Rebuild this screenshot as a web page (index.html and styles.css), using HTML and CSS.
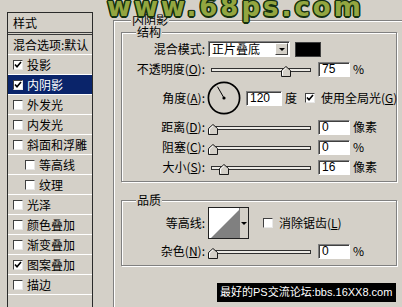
FILE: index.html
```html
<!DOCTYPE html>
<html lang="zh-CN">
<head>
<meta charset="utf-8">
<title>图层样式 - 内阴影</title>
<link rel="stylesheet" href="styles.css">
</head>
<body>
<div class="dialog">
  <div class="styles-panel">
    <div class="panel-head">样式</div>
    <div class="item plain">混合选项:默认</div>
    <div class="item"><span class="cb on"><svg viewBox="0 0 8 8"><path d="M1 3.5L3 5.8L7 1" fill="none" stroke="#000" stroke-width="1.6"/></svg></span>投影</div>
    <div class="item selected"><span class="cb on"><svg viewBox="0 0 8 8"><path d="M1 3.5L3 5.8L7 1" fill="none" stroke="#000" stroke-width="1.6"/></svg></span>内阴影</div>
    <div class="item"><span class="cb"></span>外发光</div>
    <div class="item"><span class="cb"></span>内发光</div>
    <div class="item"><span class="cb"></span>斜面和浮雕</div>
    <div class="item sub"><span class="cb"></span>等高线</div>
    <div class="item sub"><span class="cb"></span>纹理</div>
    <div class="item"><span class="cb"></span>光泽</div>
    <div class="item"><span class="cb"></span>颜色叠加</div>
    <div class="item"><span class="cb"></span>渐变叠加</div>
    <div class="item"><span class="cb on"><svg viewBox="0 0 8 8"><path d="M1 3.5L3 5.8L7 1" fill="none" stroke="#000" stroke-width="1.6"/></svg></span>图案叠加</div>
    <div class="item"><span class="cb"></span>描边</div>
  </div>

  <div class="group outer">
    <div class="group-title outer-title">内阴影</div>

    <div class="group structure">
      <div class="group-title">结构</div>
      <div class="row first">
        <span class="label">混合模式:</span>
        <div class="select"><span class="select-text">正片叠底</span><span class="select-btn"><i class="tri"></i></span></div>
        <span class="swatch"></span>
      </div>
      <div class="row">
        <span class="label">不透明度(<u>O</u>):</span>
        <div class="slider"><div class="track"></div><svg class="thumb" style="left:73px" viewBox="0 0 10 11"><path d="M0.5 10.5V4.5L5 0.5L9.5 4.5V10.5Z" fill="#d4d0c8" stroke="#1a1a1a"/><path d="M1.5 9.5V5L5 1.8" fill="none" stroke="#fff"/></svg></div>
        <span class="field">75</span><span class="unit">%</span>
      </div>
      <div class="row angle">
        <span class="label">角度(<u>A</u>):</span>
        <svg class="dial" viewBox="0 0 34 34"><circle cx="17" cy="17" r="15.6" fill="none" stroke="#000" stroke-width="1.7"/><line x1="17" y1="17" x2="10.5" y2="5.7" stroke="#000" stroke-width="1"/><circle cx="17" cy="17" r="1.6" fill="#000"/></svg>
        <span class="field wide">120</span><span class="unit">度</span>
        <span class="cb on global"><svg viewBox="0 0 8 8"><path d="M1 3.5L3 5.8L7 1" fill="none" stroke="#000" stroke-width="1.6"/></svg></span>
        <span class="cb-text">使用全局光(<u>G</u>)</span>
      </div>
      <div class="row slider-row">
        <span class="label">距离(<u>D</u>):</span>
        <div class="slider"><div class="track"></div><svg class="thumb" style="left:0px" viewBox="0 0 10 11"><path d="M0.5 10.5V4.5L5 0.5L9.5 4.5V10.5Z" fill="#d4d0c8" stroke="#1a1a1a"/><path d="M1.5 9.5V5L5 1.8" fill="none" stroke="#fff"/></svg></div>
        <span class="field">0</span><span class="unit">像素</span>
      </div>
      <div class="row slider-row">
        <span class="label">阻塞(<u>C</u>):</span>
        <div class="slider"><div class="track"></div><svg class="thumb" style="left:0px" viewBox="0 0 10 11"><path d="M0.5 10.5V4.5L5 0.5L9.5 4.5V10.5Z" fill="#d4d0c8" stroke="#1a1a1a"/><path d="M1.5 9.5V5L5 1.8" fill="none" stroke="#fff"/></svg></div>
        <span class="field">0</span><span class="unit">%</span>
      </div>
      <div class="row slider-row">
        <span class="label">大小(<u>S</u>):</span>
        <div class="slider"><div class="track"></div><svg class="thumb" style="left:11px" viewBox="0 0 10 11"><path d="M0.5 10.5V4.5L5 0.5L9.5 4.5V10.5Z" fill="#d4d0c8" stroke="#1a1a1a"/><path d="M1.5 9.5V5L5 1.8" fill="none" stroke="#fff"/></svg></div>
        <span class="field">16</span><span class="unit">像素</span>
      </div>
    </div>

    <div class="group quality">
      <div class="group-title">品质</div>
      <div class="row contour-row">
        <span class="label">等高线:</span>
        <div class="contour">
          <svg class="contour-preview" viewBox="0 0 30 30"><rect width="30" height="30" fill="#fff"/><path d="M2 30L30 2V30Z" fill="#808080"/></svg>
          <span class="contour-btn"><i class="tri"></i></span>
        </div>
        <span class="cb aa"></span>
        <span class="cb-text">消除锯齿(<u>L</u>)</span>
      </div>
      <div class="row slider-row noise">
        <span class="label">杂色(<u>N</u>):</span>
        <div class="slider"><div class="track"></div><svg class="thumb" style="left:0px" viewBox="0 0 10 11"><path d="M0.5 10.5V4.5L5 0.5L9.5 4.5V10.5Z" fill="#d4d0c8" stroke="#1a1a1a"/><path d="M1.5 9.5V5L5 1.8" fill="none" stroke="#fff"/></svg></div>
        <span class="field">0</span><span class="unit">%</span>
      </div>
    </div>
  </div>
</div>

<div class="watermark">www.68ps.com</div>
<div class="banner">最好的PS交流论坛:bbs.16XX8.com</div>
</body>
</html>
```

FILE: styles.css
```css
* { box-sizing: border-box; }

html, body {
  margin: 0;
  padding: 0;
}

body {
  width: 402px;
  height: 307px;
  overflow: hidden;
  position: relative;
  background: #d4d0c8;
  color: #000;
  font-family: "Noto Sans CJK SC", "DejaVu Sans", sans-serif;
  font-size: 12px;
  line-height: 14px;
}

u { text-decoration: underline; text-underline-offset: 1px; }

.dialog {
  display: flex;
  align-items: flex-start;
  padding: 12px 0 0 7px;
}

/* left style list */
.styles-panel {
  width: 86px;
  height: 310px;
  flex: none;
  border: 1px solid #2a2a2a;
  border-bottom: none;
}

.panel-head {
  height: 22px;
  padding: 3px 0 0 5px;
  border-bottom: 3px double #3a3a3a;
}

.item {
  display: flex;
  align-items: center;
  height: 20px;
  padding-left: 5px;
  border-bottom: 1px solid #fff;
  white-space: nowrap;
}

.item.plain { padding-left: 5px; }
.item.sub { padding-left: 17px; }

.item.selected {
  background: #0a246a;
  color: #fff;
}

.cb {
  position: relative;
  flex: none;
  width: 10px;
  height: 10px;
  margin-right: 4px;
  background: #fff;
  border: 1px solid;
  border-color: #404040 #e8e8e8 #e8e8e8 #404040;
  display: inline-flex;
  align-items: center;
  justify-content: center;
}

.cb svg { width: 8px; height: 8px; display: block; }

/* group boxes */
.group {
  border: 1px solid #808080;
  box-shadow: inset 1px 1px 0 #fff, 1px 1px 0 #fff;
}

.group-title {
  width: fit-content;
  margin: -8px 0 0 14px;
  padding: 0 1px;
  line-height: 14px;
  background: #d4d0c8;
  position: relative;
}

.outer {
  flex: none;
  width: 300px;
  height: 300px;
  margin: 8px 0 0 20px;
  padding-left: 7px;
  border-right: none;
  border-bottom: none;
}

.outer-title { margin-left: 10px; }

.structure {
  width: 276px;
  margin-top: 5px;
  padding-bottom: 6px;
}

.quality {
  width: 276px;
  margin-top: 18px;
  padding-bottom: 6px;
}

/* rows */
.row {
  display: flex;
  align-items: center;
  height: 16px;
  margin-top: 4px;
  white-space: nowrap;
}

.row.first { margin-top: 2px; }
.row.angle { height: 34px; margin-top: 4px; }
.row.angle + .row { margin-top: 4px; }

.label {
  flex: none;
  width: 83px;
  text-align: right;
}

.select {
  display: flex;
  align-items: center;
  width: 82px;
  height: 16px;
  margin-left: 3px;
  background: #fff;
  border: 1px solid;
  border-color: #808080 #fff #fff #808080;
  box-shadow: inset 1px 1px 0 #404040;
}

.select-text { flex: 1; padding-left: 3px; }

.select-btn {
  display: flex;
  align-items: center;
  justify-content: center;
  width: 13px;
  height: 12px;
  margin-right: 1px;
  background: #d4d0c8;
  border: 1px solid;
  border-color: #fff #404040 #404040 #fff;
}

.tri {
  width: 0;
  height: 0;
  border-left: 3px solid transparent;
  border-right: 3px solid transparent;
  border-top: 3px solid #000;
}

.swatch {
  width: 26px;
  height: 15px;
  margin-left: 5px;
  background: #000;
  border: 1px solid #404040;
}

.slider {
  position: relative;
  flex: none;
  width: 104px;
  height: 16px;
  margin-left: 3px;
}

.track {
  width: 100px;
  height: 4px;
  margin: 7px 0 0 3px;
  background: #ebe9e4;
  border: 1px solid #303030;
}

.thumb {
  position: absolute;
  top: 5px;
  width: 10px;
  height: 11px;
}

.field {
  flex: none;
  width: 32px;
  height: 15px;
  margin-left: 6px;
  padding-left: 3px;
  background: #fff;
  border: 1px solid;
  border-color: #808080 #fff #fff #808080;
  box-shadow: inset 1px 1px 0 #404040;
  font-family: "Liberation Sans", "DejaVu Sans", sans-serif;
  font-size: 12px;
  line-height: 13px;
}

.field.wide { width: 36px; margin-left: 5px; }

.unit {
  margin-left: 3px;
}

.dial {
  flex: none;
  width: 34px;
  height: 34px;
  margin-left: 2px;
}

.cb.global { margin-left: 8px; margin-right: 0; }
.cb-text { margin-left: 6px; }

/* quality */
.row.contour-row { height: 32px; margin-top: 0; }

.contour {
  display: flex;
  width: 41px;
  height: 32px;
  margin-left: 3px;
  border: 1px solid #202020;
}

.contour-preview {
  width: 30px;
  height: 30px;
  display: block;
}

.contour-btn {
  display: flex;
  align-items: center;
  justify-content: center;
  width: 9px;
  background: #d4d0c8;
  border-left: 1px solid #808080;
}

.cb.aa { margin-left: 14px; margin-right: 0; }
.row.noise { margin-top: 4px; }

/* overlays */
.watermark {
  position: absolute;
  left: 107px;
  top: -8px;
  font-family: "DejaVu Sans", sans-serif;
  font-weight: bold;
  font-size: 26px;
  line-height: 30px;
  letter-spacing: 3px;
  color: #93a640;
  text-shadow:
    1.5px 0 0 #14300f, -1.5px 0 0 #14300f, 0 1.5px 0 #14300f, 0 -1.5px 0 #14300f,
    1px 1px 0 #14300f, -1px -1px 0 #14300f, 1px -1px 0 #14300f, -1px 1px 0 #14300f;
}

.banner {
  position: absolute;
  left: 217px;
  top: 283px;
  width: 179px;
  height: 19px;
  padding-left: 3px;
  background: #000;
  color: #fff;
  font-family: "Liberation Sans", "Noto Sans CJK SC", sans-serif;
  font-size: 11px;
  line-height: 19px;
  white-space: nowrap;
  overflow: hidden;
}
```
